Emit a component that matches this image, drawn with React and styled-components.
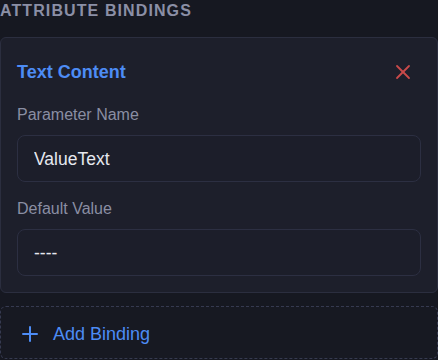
import styled, { createGlobalStyle } from "styled-components";
import { X, Plus } from "lucide-react";

const GlobalStyle = createGlobalStyle`
  * {
    box-sizing: border-box;
  }

  body {
    margin: 0;
    background-color: #161821;
    font-family: "Liberation Sans", Arial, sans-serif;
  }
`;

const bindings = [
  {
    title: "Text Content",
    fields: [
      { label: "Parameter Name", value: "ValueText" },
      { label: "Default Value", value: "----" },
    ],
  },
];

export default function App() {
  return (
    <>
      <GlobalStyle />
      <Panel>
        <SectionTitle>Attribute Bindings</SectionTitle>
        {bindings.map((binding) => (
          <BindingCard key={binding.title}>
            <CardHeader>
              <CardTitle>{binding.title}</CardTitle>
              <RemoveButton aria-label="Remove binding">
                <X size={24} strokeWidth={1.8} />
              </RemoveButton>
            </CardHeader>
            <Fields>
              {binding.fields.map((field) => (
                <Field key={field.label}>
                  <FieldLabel>{field.label}</FieldLabel>
                  <FieldInput defaultValue={field.value} />
                </Field>
              ))}
            </Fields>
          </BindingCard>
        ))}
        <AddButton>
          <Plus size={24} strokeWidth={2} />
          <span>Add Binding</span>
        </AddButton>
      </Panel>
    </>
  );
}

const Panel = styled.div`
  width: 438px;
  display: flex;
  flex-direction: column;
`;

const SectionTitle = styled.h3`
  margin: 0 0 16px;
  height: 21px;
  line-height: 22px;

  font-size: 16px;
  font-weight: 700;
  letter-spacing: 1.1px;
  text-transform: uppercase;
  color: #8b8fa6;
`;

const BindingCard = styled.div`
  width: 100%;
  padding: 16px;
  border: 1px solid #2b2e3f;
  border-radius: 6px;

  background-color: #1d1f2b;
`;

const CardHeader = styled.div`
  height: 36px;
  margin-bottom: 14px;

  display: flex;
  justify-content: space-between;
  align-items: center;
`;

const CardTitle = styled.span`
  font-size: 18px;
  font-weight: 700;
  color: #4d8cf5;
`;

const RemoveButton = styled.button`
  width: 24px;
  height: 24px;
  margin-right: 6px;
  padding: 0;
  border: none;

  display: flex;
  justify-content: center;
  align-items: center;

  color: #c94a4a;
  background: transparent;
`;

const Fields = styled.div`
  display: flex;
  flex-direction: column;
  gap: 16px;
`;

const Field = styled.label`
  display: flex;
  flex-direction: column;
`;

const FieldLabel = styled.span`
  height: 22px;
  margin-bottom: 9px;
  line-height: 22px;

  font-size: 16px;
  color: #8a8ea3;
`;

const FieldInput = styled.input`
  width: 100%;
  height: 47px;
  padding: 2px 16px 0;
  border: 1px solid #2c2f42;
  border-radius: 8px;
  outline: none;

  font-family: inherit;
  font-size: 17.5px;
  color: #e6e8ef;

  background-color: #1c1e2a;
`;

const AddButton = styled.button`
  width: 100%;
  height: 53px;
  margin-top: 13px;
  padding: 3px 17px 0;
  border: 1px dashed #363a50;
  border-radius: 6px;

  display: flex;
  align-items: center;
  gap: 11px;

  font-family: inherit;
  font-size: 18px;
  color: #4d8cf5;

  background-color: #171922;
`;
